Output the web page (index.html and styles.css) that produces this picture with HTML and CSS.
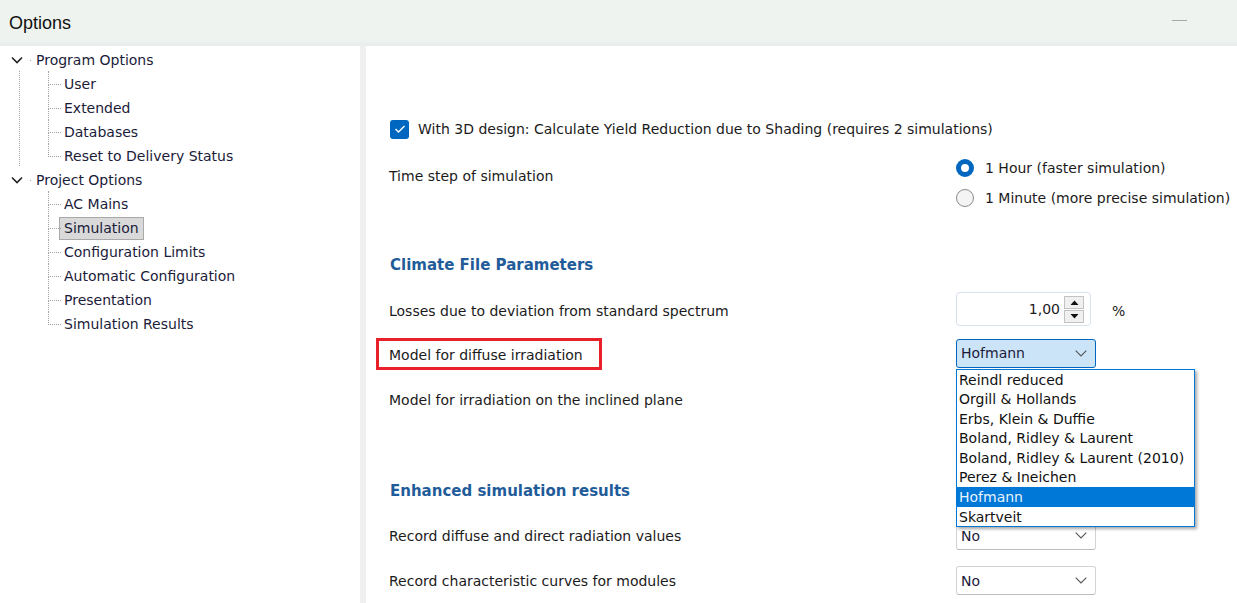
FILE: index.html
```html
<!DOCTYPE html>
<html>
<head>
<meta charset="utf-8">
<link rel="stylesheet" href="styles.css">
</head>
<body>
<div class="window">
  <header class="titlebar">
    <span class="title">Options</span>
    <span class="minimize"></span>
  </header>
  <div class="main">
    <nav class="tree-pane">
      <ul class="tree">
        <li class="top">
          <div class="top-row">
            <svg class="chev" width="12" height="8" viewBox="0 0 12 8"><path d="M1 1.5 L6 6.5 L11 1.5" fill="none" stroke="#222" stroke-width="1.6"/></svg>
            <span class="dot"></span>
            <span class="lbl">Program Options</span>
          </div>
          <ul class="children">
            <li><span class="lbl">User</span></li>
            <li><span class="lbl">Extended</span></li>
            <li><span class="lbl">Databases</span></li>
            <li><span class="lbl">Reset to Delivery Status</span></li>
          </ul>
        </li>
        <li class="top">
          <div class="top-row">
            <svg class="chev" width="12" height="8" viewBox="0 0 12 8"><path d="M1 1.5 L6 6.5 L11 1.5" fill="none" stroke="#222" stroke-width="1.6"/></svg>
            <span class="dot"></span>
            <span class="lbl">Project Options</span>
          </div>
          <ul class="children">
            <li><span class="lbl">AC Mains</span></li>
            <li><span class="lbl selected">Simulation</span></li>
            <li><span class="lbl">Configuration Limits</span></li>
            <li><span class="lbl">Automatic Configuration</span></li>
            <li><span class="lbl">Presentation</span></li>
            <li><span class="lbl">Simulation Results</span></li>
          </ul>
        </li>
      </ul>
    </nav>
    <div class="splitter"></div>
    <section class="content">
      <div class="row check-row">
        <span class="checkbox">
          <svg width="12" height="10" viewBox="0 0 12 10"><path d="M1.5 5 L4.5 8 L10.5 2" fill="none" stroke="#fff" stroke-width="1.4"/></svg>
        </span>
        <span class="text">With 3D design: Calculate Yield Reduction due to Shading (requires 2 simulations)</span>
      </div>

      <div class="row time-row">
        <span class="label time-label">Time step of simulation</span>
        <div class="radios">
          <div class="radio-item"><span class="radio on"></span><span>1 Hour (faster simulation)</span></div>
          <div class="radio-item"><span class="radio"></span><span>1 Minute (more precise simulation)</span></div>
        </div>
      </div>

      <h2 class="heading heading-climate">Climate File Parameters</h2>

      <div class="row losses-row">
        <span class="label">Losses due to deviation from standard spectrum</span>
        <div class="spin-wrap">
          <div class="spin">
            <span class="spin-value">1,00</span>
            <div class="spin-btns">
              <span class="spin-btn"><svg width="9" height="5" viewBox="0 0 9 5"><path d="M0.5 5 L4.5 0.5 L8.5 5Z" fill="#111"/></svg></span>
              <span class="spin-btn"><svg width="9" height="5" viewBox="0 0 9 5"><path d="M0.5 0 L4.5 4.5 L8.5 0Z" fill="#111"/></svg></span>
            </div>
          </div>
          <span class="unit">%</span>
        </div>
      </div>

      <div class="row diffuse-row">
        <span class="label highlight">Model for diffuse irradiation</span>
        <div class="combo-wrap">
          <div class="combo active">
            <span>Hofmann</span>
            <svg class="cchev" width="12" height="7" viewBox="0 0 12 7"><path d="M0.7 0.7 L6 6 L11.3 0.7" fill="none" stroke="#555" stroke-width="1.1"/></svg>
          </div>
          <ul class="dropdown">
            <li>Reindl reduced</li>
            <li>Orgill &amp; Hollands</li>
            <li>Erbs, Klein &amp; Duffie</li>
            <li>Boland, Ridley &amp; Laurent</li>
            <li>Boland, Ridley &amp; Laurent (2010)</li>
            <li>Perez &amp; Ineichen</li>
            <li class="hl">Hofmann</li>
            <li>Skartveit</li>
          </ul>
        </div>
      </div>

      <div class="row inclined-row">
        <span class="label">Model for irradiation on the inclined plane</span>
      </div>

      <h2 class="heading heading-enh">Enhanced simulation results</h2>

      <div class="row rec1-row">
        <span class="label">Record diffuse and direct radiation values</span>
        <div class="combo">
          <span>No</span>
          <svg class="cchev" width="12" height="7" viewBox="0 0 12 7"><path d="M0.7 0.7 L6 6 L11.3 0.7" fill="none" stroke="#555" stroke-width="1.1"/></svg>
        </div>
      </div>

      <div class="row rec2-row">
        <span class="label">Record characteristic curves for modules</span>
        <div class="combo">
          <span>No</span>
          <svg class="cchev" width="12" height="7" viewBox="0 0 12 7"><path d="M0.7 0.7 L6 6 L11.3 0.7" fill="none" stroke="#555" stroke-width="1.1"/></svg>
        </div>
      </div>
    </section>
  </div>
</div>
</body>
</html>
```

FILE: styles.css
```css
* { box-sizing: border-box; }
html, body { margin: 0; padding: 0; }
body {
  width: 1237px;
  height: 603px;
  overflow: hidden;
  font-family: "DejaVu Sans", Verdana, sans-serif;
  font-size: 14px;
  color: #1b1b1b;
  background: #fff;
}
.window { display: flex; flex-direction: column; height: 603px; }

.titlebar {
  height: 46px;
  flex: none;
  background: linear-gradient(#eef3ef 0, #eef3ef 40px, #e8edec 46px);
  display: flex;
  align-items: center;
  justify-content: space-between;
  padding: 0 50px 0 9px;
  font-family: "Liberation Sans", Arial, sans-serif;
}
.title { font-size: 18px; color: #111; }
.minimize { width: 15px; height: 1px; background: #a8aaa8; margin-top: -6px; }

.main { flex: 1; display: flex; min-height: 0; }

.tree-pane { width: 360px; flex: none; background: #fff; padding-top: 2px; }
.splitter { width: 6px; flex: none; background: #f0f0f0; }
.content { flex: 1; background: #fff; padding-left: 23px; position: relative; }

/* tree */
.tree, .children { list-style: none; margin: 0; padding: 0; }
.top { position: relative; }
.top:first-child::after {
  content: "";
  position: absolute;
  left: 19px;
  top: 23px;
  bottom: 2px;
  border-left: 1px dotted #a0a0a0;
}
.top-row { height: 24px; display: flex; align-items: center; color: #1b1b3a; }
.chev { margin-left: 11px; flex: none; }
.dot { width: 1px; height: 1px; background: #a0a0a0; margin-left: 7px; margin-right: 5px; }
.children { margin-left: 48px; }
.children li { position: relative; height: 24px; display: flex; align-items: center; }
.children li::before {
  content: "";
  position: absolute;
  left: 0;
  top: -1px;
  height: 13px;
  width: 12px;
  border-left: 1px dotted #a0a0a0;
  border-bottom: 1px dotted #a0a0a0;
}
.children li:not(:last-child)::after {
  content: "";
  position: absolute;
  left: 0;
  top: 12px;
  bottom: 0;
  border-left: 1px dotted #a0a0a0;
}
.children .lbl {
  margin-left: 11px;
  padding: 0 4px;
  height: 23px;
  line-height: 21px;
  border: 1px solid transparent;
  color: #1b1b3a;
}
.children .lbl.selected { background: #d9d9d9; border-color: #a9a9a9; }

/* content rows */
.row { display: flex; align-items: center; }
.label { width: 567px; flex: none; }

.check-row { margin-top: 71px; height: 24px; }
.checkbox {
  width: 19px; height: 19px;
  border-radius: 3px;
  background: #0067c0;
  display: inline-flex; align-items: center; justify-content: center;
  margin-left: 1px; margin-right: 9px;
}
.time-row { margin-top: 15px; align-items: flex-start; }
.time-label { padding-top: 12px; }
.radios { display: flex; flex-direction: column; gap: 6px; }
.radio-item { height: 24px; display: flex; align-items: center; gap: 11px; }
.radio {
  width: 18px; height: 18px; border-radius: 50%;
  border: 1px solid #8a8a8a; background: #f4f4f4;
}
.radio.on { border: 5px solid #0067c0; background: #fff; }

.heading {
  margin: 0;
  font-size: 15px;
  font-weight: bold;
  color: #1f5c99;
  height: 24px;
  line-height: 24px;
  padding-left: 1px;
}
.heading-climate { margin-top: 43px; }

.losses-row { margin-top: 15px; height: 34px; }
.losses-row .label { padding-top: 3px; }
.spin-wrap { display: flex; align-items: center; }
.spin {
  width: 135px; height: 34px;
  border: 1px solid #d6e1ec;
  border-radius: 4px;
  display: flex; align-items: center; justify-content: flex-end;
  padding-right: 6px;
  background: #fff;
}
.spin-value { margin-right: 4px; }
.spin-btns { display: flex; flex-direction: column; }
.spin-btn {
  width: 20px; height: 13px;
  background: #f0f0f0;
  border: 1px solid #c3c3c3;
  display: flex; align-items: center; justify-content: center;
}
.spin-btn + .spin-btn { margin-top: 1px; }
.unit { margin-left: 21px; margin-top: 3px; }

.diffuse-row { margin-top: 12px; height: 30px; }
.highlight {
  margin-left: -13px;
  margin-right: 354px;
  margin-top: 2px;
  padding: 6px 10px 0 10px;
  border: 3px solid #e8202a;
  height: 32px;
  width: 226px;
  white-space: nowrap;
}
.combo-wrap { position: relative; }
.combo {
  width: 140px; height: 29px;
  border: 1px solid #d3d3d3;
  border-bottom-color: #bcbcbc;
  border-radius: 3px;
  background: #fff;
  display: flex; align-items: center; justify-content: space-between;
  padding: 0 8px 0 4px;
  color: #1b1b3a;
}
.combo.active { background: #cce4f7; border-color: #0067c0; }
.dropdown {
  position: absolute;
  left: 0;
  top: 30px;
  width: 239px;
  margin: 0; padding: 0;
  list-style: none;
  background: #fff;
  border: 1px solid #0078d7;
  box-shadow: 2px 2px 3px rgba(0,0,0,0.35);
  z-index: 5;
}
.dropdown li { height: 19.6px; line-height: 20px; padding-left: 2px; color: #111; white-space: nowrap; }
.dropdown li.hl { background: #0078d7; color: #e8f2ff; }

.inclined-row { margin-top: 17px; height: 30px; }

.heading-enh { margin-top: 64px; }
.rec1-row { margin-top: 18px; height: 29px; }
.rec2-row { margin-top: 16px; height: 29px; }
```
